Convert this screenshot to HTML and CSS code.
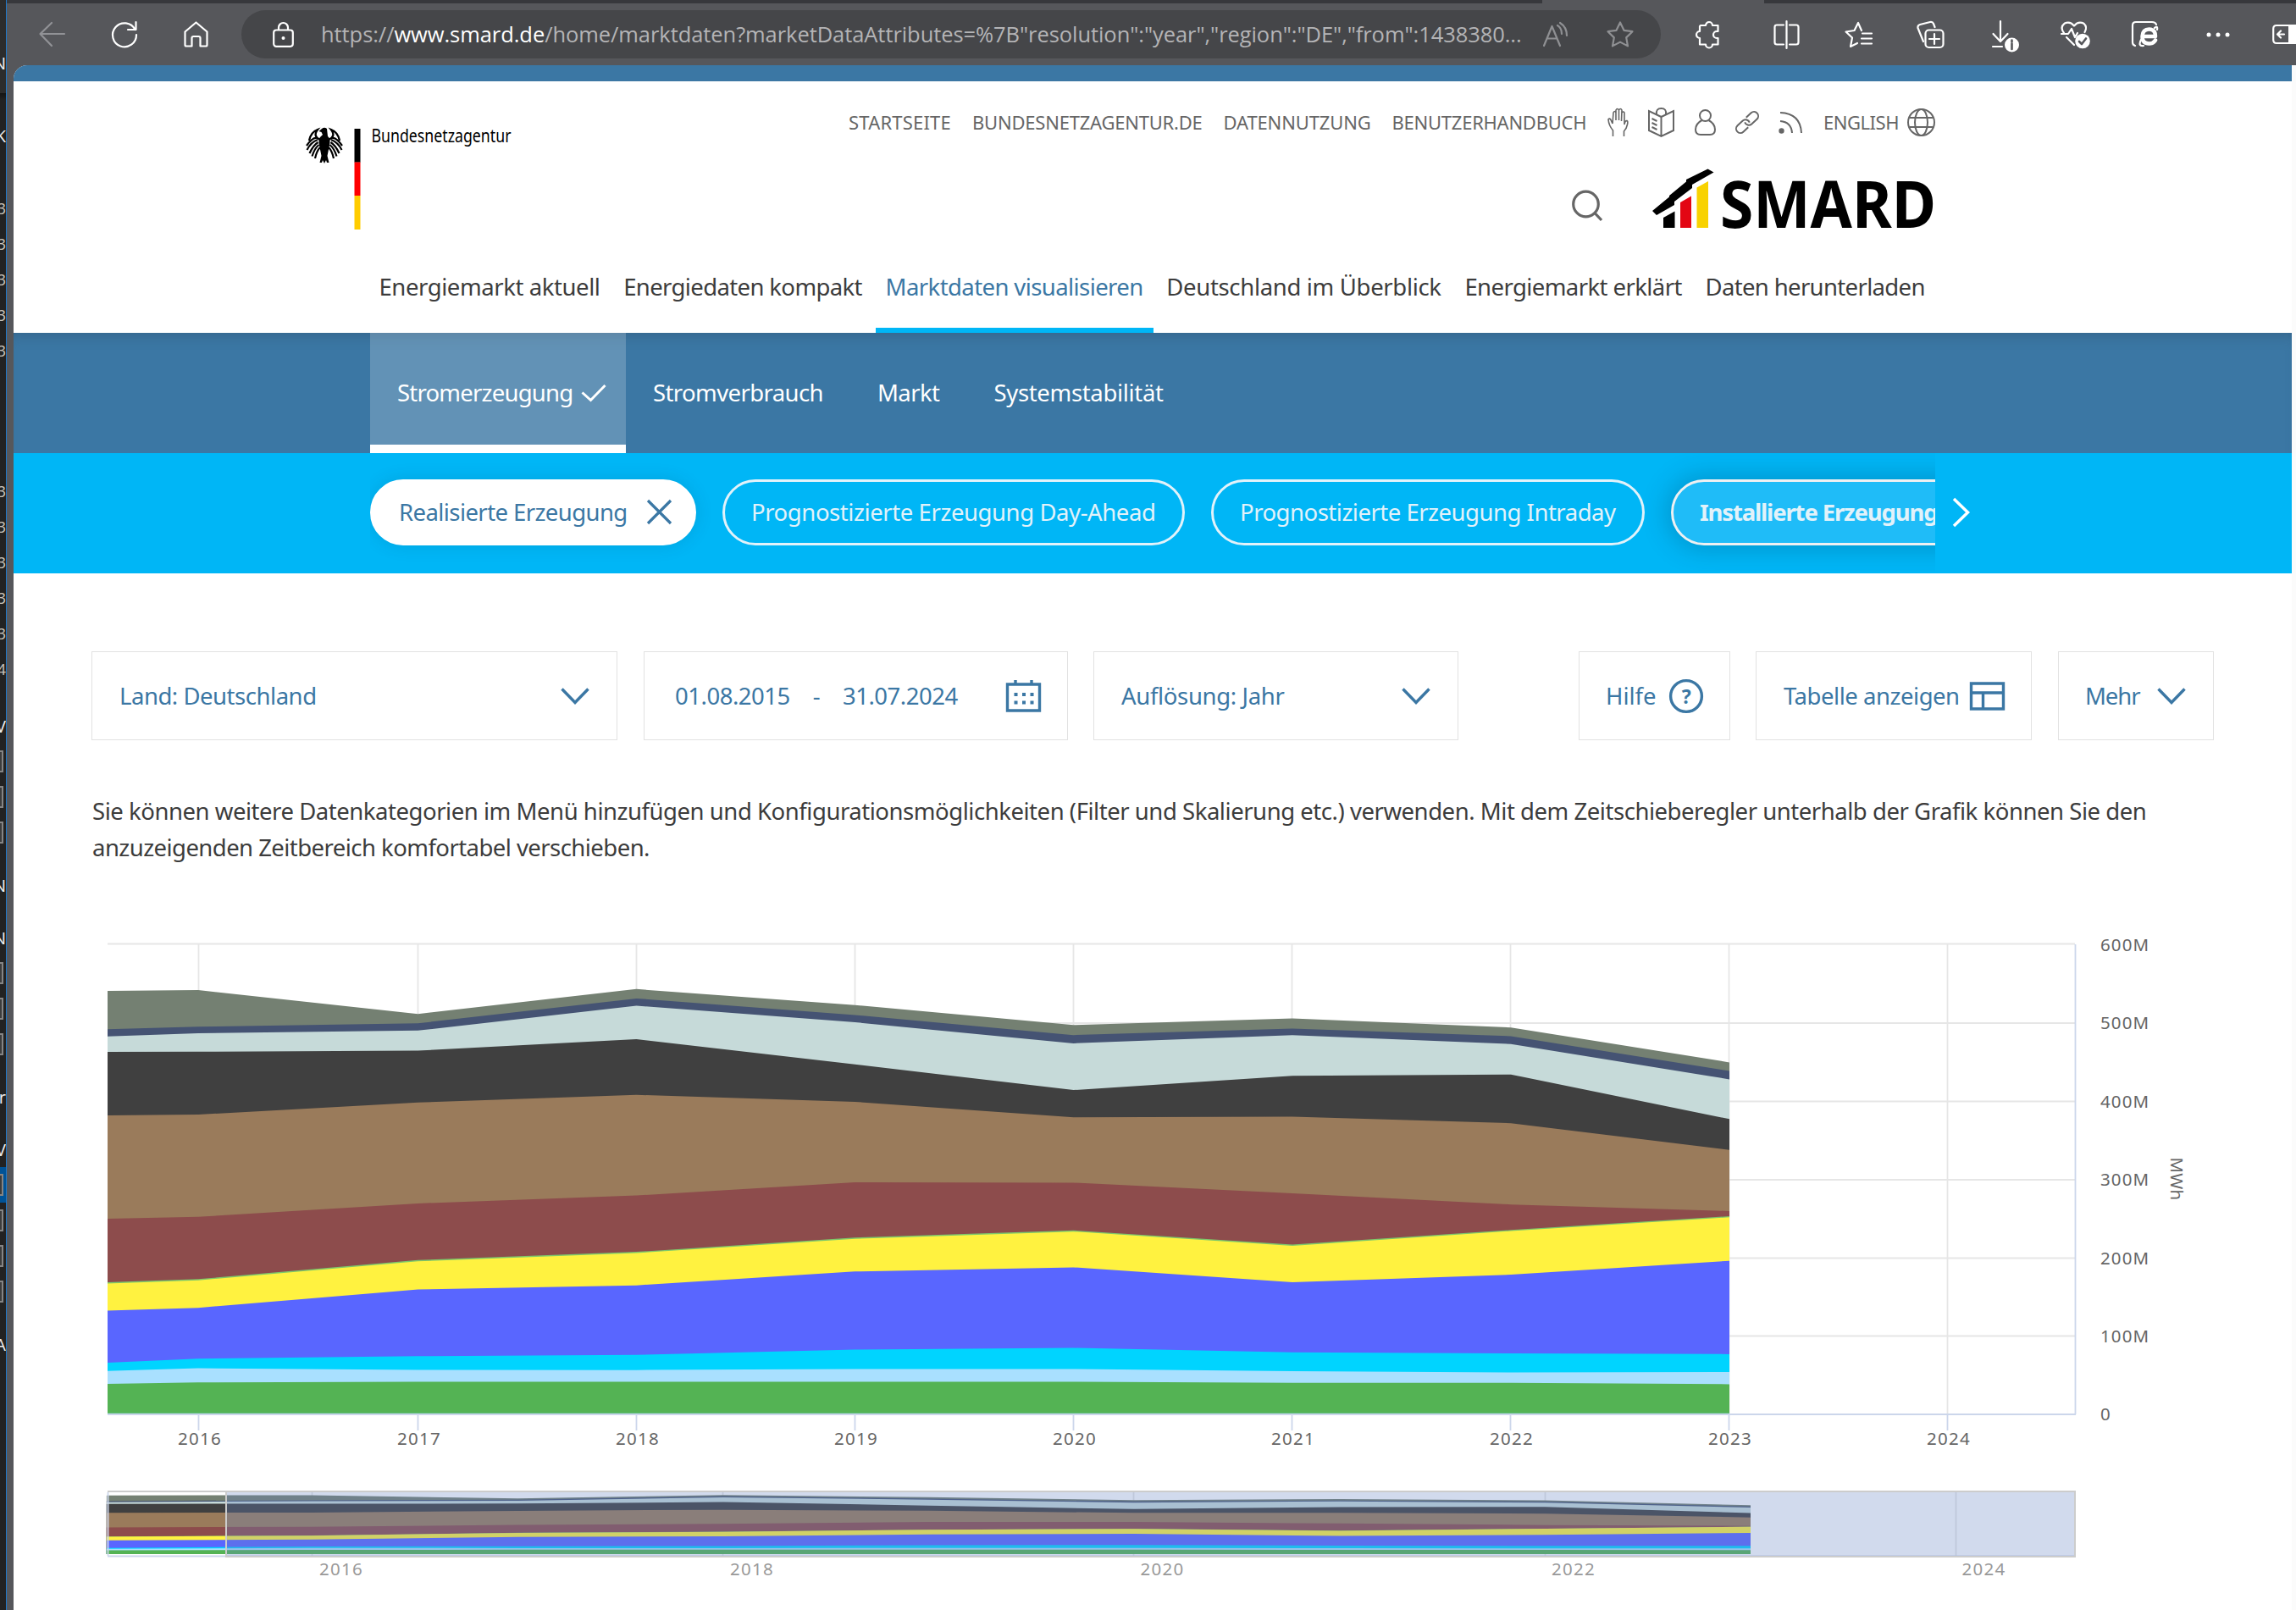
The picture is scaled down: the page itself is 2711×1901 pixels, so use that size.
FILE: index.html
```html
<!DOCTYPE html>
<html lang="de">
<head>
<meta charset="utf-8">
<title>SMARD | Marktdaten visualisieren</title>
<link rel="stylesheet" href="styles.css">
</head>
<body>
<aside class="behind">
  <div class="grp g1"><span>N</span></div>
  <div class="grp g2"><span>K</span></div>
  <div class="grp g3"><span>3</span><span>3</span><span>3</span><span>3</span><span>3</span></div>
  <div class="grp g4"><span>3</span><span>3</span><span>3</span><span>3</span><span>3</span><span>4</span></div>
  <div class="grp g5"><span>V</span><i></i><i></i><i></i></div>
  <div class="grp g6"><span>N</span></div>
  <div class="grp g6"><span>N</span><i></i><i></i><i></i></div>
  <div class="grp g6"><span>Fr</span></div>
  <div class="grp g6"><span>V</span><i class="sel"></i><i></i><i></i><i></i></div>
  <div class="grp g6"><span>A</span></div>
</aside>
<div class="window">
  <div class="tabs"><div class="tab"></div></div>
  <div class="toolbar">
    <svg class="tb back" width="31" height="30" viewBox="0 0 31 30"><path d="M30 14H2M15 1 1.500 14 15 28"/></svg>
    <svg class="tb reload" width="32" height="32" viewBox="0 0 32 32"><path d="M29.500 1v9H20M28.500 10A14 14 0 1 0 30 16"/></svg>
    <svg class="tb home" width="29" height="31" viewBox="0 0 29 31"><path d="M1.500 12.500 14.500 1.500l13 11V28q0 1.500-1.500 1.500h-6.500v-9.500q0-2-2-2h-6q-2 0-2 2v9.500H3q-1.500 0-1.500-1.500z"/></svg>
    <div class="address">
      <svg class="tb" width="25" height="30" viewBox="0 0 25 30"><rect x="1.200" y="9.500" width="22.600" height="19.300" rx="3"/><path d="M7 9V6.500a5.500 5.500 0 0 1 11 0V9"/><circle cx="12.500" cy="19" r="2" class="fill"/></svg>
      <span class="url">https://<b>www.smard.de</b>/home/marktdaten?marketDataAttributes=%7B"resolution":"year","region":"DE","from":1438380...</span>
      <svg class="tb dim" width="30" height="29" viewBox="0 0 30 29"><path d="M1 28 10.500 5 20 28M4.500 19.500h12M17 4q5 3 5 10M20 1q8 5 8 15"/></svg>
      <svg class="tb dim star" width="32" height="31" viewBox="0 0 32 31"><path d="m16 1.500 4.500 9.300 10 1.400-7.300 7.200 1.800 10L16 24.600l-9 4.800 1.800-10L1.500 12.200l10-1.400z"/></svg>
    </div>
    <svg class="tb puzzle" width="29" height="32" viewBox="0 0 29 32"><path d="M6 5h6a4 4 0 0 1 8 0h6.500v7H25a4 4 0 0 0 0 8h1.500v7.500H20a4 4 0 0 1-8 0H5V20a4 4 0 0 1 0-8V6z"/></svg>
    <i class="divider"></i>
    <svg class="tb split" width="31" height="32" viewBox="0 0 31 32"><path d="M12 4.500H4q-2.500 0-2.500 2.500v18q0 2.500 2.500 2.500h8M19 4.500h8q2.500 0 2.500 2.500v18q0 2.500-2.500 2.500h-8M15.500 0v32"/></svg>
    <svg class="tb favs" width="33" height="32" viewBox="0 0 33 32"><path d="M20 11 16 2l-4.500 9L1.500 12.500 9 19.500 7 30l8-4M21 14.500h11M20 20.500h12M20 26.500h12"/></svg>
    <svg class="tb coll" width="33" height="32" viewBox="0 0 33 32"><rect x="10.500" y="10.500" width="21" height="20.500" rx="4"/><path d="M21 15v12M15 21h12M8 24 1.500 8Q1 5 4 4l12-3q3-.5 4 2l1.500 4"/></svg>
    <svg class="tb down" width="34" height="37" viewBox="0 0 34 37"><path d="M10 0v23M1.500 15 10 24l8.500-9M1 30h11"/><circle cx="23.500" cy="28" r="8.500" class="fill"/><path class="hole" d="M23.500 26.500v6.500M23.500 22.500v2"/></svg>
    <svg class="tb heart" width="36" height="33" viewBox="0 0 36 33"><path d="M4 14Q-1 7 4.500 2.800 11-.5 16 5.500 21-.5 27.500 2.800 32 7 28.500 13M1 15h8l4-6 4 10 3-5M7 19l9 9"/><circle cx="26" cy="23.500" r="8.800" class="fill"/><path class="hole" d="m22 24 3 3 5-6.500"/></svg>
    <svg class="tb ie" width="32" height="31" viewBox="0 0 32 31"><path d="M4 29q-3-1-3-4V5q0-4 4-4h19q4 0 5 3"/><path class="fat" d="M13 18h15q0-8.500-7.500-8.500T12.500 18q0 8.500 8 8.500 5 0 7.500-4"/><path d="M27 8q4-3 3 2M11 22q-4 8 3 7"/></svg>
    <svg class="tb dots" width="28" height="6" viewBox="0 0 28 6"><g class="fill"><circle cx="3" cy="3" r="2.500"/><circle cx="14" cy="3" r="2.500"/><circle cx="25" cy="3" r="2.500"/></g></svg>
    <svg class="tb side" width="28" height="23" viewBox="0 0 28 23"><path d="M30 1H5Q1.200 1 1.200 5v13q0 4 3.800 4h25M14 11.500H7M10 7.500l-4 4 4 4"/><path class="fill" d="M19 0h9v23h-9z"/></svg>
  </div>
  <div class="page">
    <div class="topline"></div>
    <header class="header">
      <svg class="brand" width="256" height="130" viewBox="360 145 256 130">
        <g class="eagle">
          <path d="M380 152q3-2.500 6 0l1 9q3 2 2.500 8l-2 10-1 5 2 8h-2.500l-1-3-2 4-2-4-1 3H377.500l2-8-1-5-2-10q-.5-6 2.500-8l2-2-1.500-3-3-1z"/>
          <path class="feather" d="M374 163q-5-1-12 9M375 165q-8 3-12.500 12M375.500 168q-6 4-10 13M376.500 171q-5 4-8 13.500M378 174q-4 4-6 13M392 163q5-1 12 9M391 165q8 3 12.500 12M390.500 168q6 4 10 13M389.500 171q5 4 8 13.500M388 174q4 4 6 13"/>
          <path class="head" d="M378 165q-9-4-3-12-8 3-10 13M388 165q9-4 3-12 8 3 10 13"/>
        </g>
        <path d="M418.500 152h7v39.700h-7z"/><path class="red" d="M418.500 191.500h7V231h-7z"/><path class="gold" d="M418.500 231h7v40h-7z"/>
        <text x="438.500" y="167.700" textLength="165" lengthAdjust="spacingAndGlyphs">Bundesnetzagentur</text>
      </svg>
      <nav class="meta">
        <span class="m1">STARTSEITE</span><span class="m2">BUNDESNETZAGENTUR.DE</span><span class="m3">DATENNUTZUNG</span><span class="m4">BENUTZERHANDBUCH</span>
        <svg class="hand" width="25" height="35" viewBox="0 0 25 35"><path d="M6.500 34v-7Q1.500 21 1 14q1.500-2 3 .5L6 19M6 19 7 6q1.500-3 3 0v9M10 6V3q1.500-3 3.500 0v12M13.500 3q2-3 3.500 0l-.5 13M17 6q2-2 3 0v14q1-5 3-4.500 1.500 1 .5 4.500-1 5-4 8v6"/></svg>
        <svg width="31" height="35" viewBox="0 0 31 35"><path d="M15.500 34V11L1 4v23l14.500 7L30 27V4l-14.500 7M10 8q-1-7 5.500-7T21 8M4.500 13l6 3M4.500 18l6 3M4.500 23l6 3"/></svg>
        <svg width="25" height="31" viewBox="0 0 25 31"><circle cx="12.500" cy="7.500" r="6.500"/><path d="M8.500 13Q1 17 1 24q0 6 6 6h11q6 0 6-6 0-7-7.500-11"/></svg>
        <svg width="28" height="27" viewBox="0 0 28 27"><g transform="rotate(-43 14 13.500)"><path d="M11 18.500H3a5 5 0 0 1 0-10h8.500a5 5 0 0 1 4.500 7M17 8.500h8a5 5 0 0 1 0 10h-8.500a5 5 0 0 1-4.500-7"/></g></svg>
        <svg width="28" height="27" viewBox="0 0 28 27"><path d="M2 2q24 1 25 24M2 12q13 1 14 14"/><circle cx="3.500" cy="23.500" r="2.200" class="dot"/></svg>
        <span class="m5">ENGLISH</span>
        <svg class="globe" width="33" height="33" viewBox="0 0 33 33"><circle cx="16.500" cy="16.500" r="15.500"/><ellipse cx="16.500" cy="16.500" rx="7.500" ry="15.500"/><path d="M3 11h27M3 22h27"/></svg>
      </nav>
      <div class="identity">
        <svg class="search" width="37" height="38" viewBox="0 0 37 38"><circle cx="16.500" cy="16" r="14.800"/><path d="m27 26.500 8 8.500"/></svg>
        <svg class="smard" width="336" height="74" viewBox="1950 198 336 74">
          <path d="m1951 249 20-16.500V231l20-16.500V212l25.500-12.500 7 4L1998 218v4l-21 16v4l-21 12z"/>
          <path d="m1964 257 13.500-7.500v19.500H1964z"/><path class="r" d="m1984 239 13-7.500V269h-13z"/><path class="y" d="m2003.500 221.500 13.500-7.500v55h-13.500z"/>
          <text x="2031" y="268.700" textLength="255" lengthAdjust="spacingAndGlyphs">SMARD</text>
        </svg>
      </div>
      <nav class="main-nav">
        <span class="n1">Energiemarkt aktuell</span><span class="n2">Energiedaten kompakt</span><span class="n3 active">Marktdaten visualisieren</span><span class="n4">Deutschland im Überblick</span><span class="n5">Energiemarkt erklärt</span><span class="n6">Daten herunterladen</span>
      </nav>
    </header>
    <nav class="categories">
      <span class="c1 active">Stromerzeugung<svg width="30" height="22" viewBox="0 0 30 22"><path d="m1.500 10.500 10 9L28.500 2"/></svg></span><span class="c2">Stromverbrauch</span><span class="c3">Markt</span><span class="c4">Systemstabilität</span>
    </nav>
    <div class="subcats">
      <div class="pills">
        <span class="pill p1 on">Realisierte Erzeugung<svg width="31" height="31" viewBox="0 0 31 31"><path d="M2 2l27 27M29 2 2 29"/></svg></span>
        <span class="pill p2">Prognostizierte Erzeugung Day-Ahead</span>
        <span class="pill p3">Prognostizierte Erzeugung Intraday</span>
        <span class="pill p4 hover">Installierte Erzeugungsleistung</span>
      </div>
      <svg class="next" width="21" height="36" viewBox="0 0 21 36"><path d="m2 2 16.500 16L2 34"/></svg>
    </div>
    <main class="content">
      <div class="controls">
        <div class="box land"><span>Land: Deutschland</span><svg width="34" height="20" viewBox="0 0 34 20"><path d="m1.500 1.500 15.500 16 15.500-16"/></svg></div>
        <div class="box dates"><span>01.08.2015</span><span class="dash">-</span><span>31.07.2024</span><svg width="41" height="38" viewBox="0 0 41 38"><path d="M1.500 5h38v31h-38zM11 0v6M30 0v6"/><path class="dotted" d="M9.500 17h24M9.500 26.500h24"/></svg></div>
        <div class="box res"><span>Auflösung: Jahr</span><svg width="34" height="20" viewBox="0 0 34 20"><path d="m1.500 1.500 15.500 16 15.500-16"/></svg></div>
        <div class="box help"><span>Hilfe</span><svg width="40" height="40" viewBox="0 0 40 40"><circle cx="20" cy="20" r="18.400"/><text x="20" y="28.500" text-anchor="middle">?</text></svg></div>
        <div class="box table"><span>Tabelle anzeigen</span><svg width="41" height="34" viewBox="0 0 41 34"><path d="M1.500 2h38v30h-38zM1.500 13h38M15.500 13v19"/></svg></div>
        <div class="box more"><span>Mehr</span><svg width="34" height="20" viewBox="0 0 34 20"><path d="m1.500 1.500 15.500 16 15.500-16"/></svg></div>
      </div>
      <p class="intro">Sie können weitere Datenkategorien im Menü hinzufügen und Konfigurationsmöglichkeiten (Filter und Skalierung etc.) verwenden. Mit dem Zeitschieberegler unterhalb der Grafik können Sie den<br><span class="line2">anzuzeigenden Zeitbereich komfortabel verschieben.</span></p>
      <svg class="chart" width="2500" height="811" viewBox="108 1090 2500 811">
        <defs>
          <clipPath id="plot"><rect x="127" y="1100" width="1915" height="570"/></clipPath>
          <g id="areas">
            <path fill="#748072" d="M-23 200 234 195 493.500 264 751.500 192 1009.500 238 1267.500 296 1526 277 1784 303 2042 404V1419H-23z"/>
            <path fill="#455373" d="M-23 318 234 301 493.500 291 751.500 219 1009.500 267 1267.500 325 1526 306 1784 328 2042 429V1419H-23z"/>
            <path fill="#c6dad9" d="M-23 342 234 320 493.500 312 751.500 240 1009.500 288 1267.500 349 1526 325 1784 351 2042 453V1419H-23z"/>
            <path fill="#404040" d="M-23 375 234 373 493.500 370 751.500 337 1009.500 410 1267.500 484 1526 443 1784 439 2042 568V1419H-23z"/>
            <path fill="#9a7b5b" d="M-23 560 234 555 493.500 520 751.500 498 1009.500 518 1267.500 563 1526 561 1784 580 2042 657V1419H-23z"/>
            <path fill="#8d4c4c" d="M-23 863 234 851 493.500 812 751.500 789 1009.500 751 1267.500 752 1526 783 1784 815 2042 834V1419H-23z"/>
            <path fill="#7dc86a" d="M-23 1053 234 1031 493.500 976 751.500 952 1009.500 911 1267.500 890 1526 931 1784 889 2042 849V1419H-23z"/>
            <path fill="#fff240" d="M-23 1056 234 1034.500 493.500 979.500 751.500 955.500 1009.500 914.500 1267.500 893.500 1526 934.500 1784 892 2042 852V1419H-23z"/>
            <path fill="#5966ff" d="M-23 1133 234 1114 493.500 1061 751.500 1049 1009.500 1009 1267.500 997 1526 1040 1784 1018 2042 978V1419H-23z"/>
            <path fill="#00d4ff" d="M-23 1290 234 1261 493.500 1254 751.500 1250 1009.500 1235 1267.500 1230 1526 1243 1784 1246 2042 1248V1419H-23z"/>
            <path fill="#a9e0ff" d="M-23 1308 234 1289 493.500 1293.500 751.500 1294 1009.500 1291 1267.500 1291 1526 1297 1784 1301 2042 1300V1419H-23z"/>
            <path fill="#54b354" d="M-23 1340 234 1330 493.500 1328 751.500 1328 1009.500 1328 1267.500 1328 1526 1331 1784 1331 2042 1335V1419H-23z"/>
          </g>
        </defs>
        <path class="grid" d="M127 1114.500H2450M127 1208H2450M127 1300.500H2450M127 1393H2450M127 1485.500H2450M127 1577.500H2450M234.500 1115V1670M493.500 1115V1670M751.500 1115V1670M1009.500 1115V1670M1267.500 1115V1670M1525.500 1115V1670M1783.500 1115V1670M2041.500 1115V1670M2299.500 1115V1670"/>
        <g clip-path="url(#plot)"><use href="#areas" transform="matrix(1 0 0 .40816 0 1089.500)"/></g>
        <path class="axis" d="M127 1670H2451M2450.500 1115V1670M234.500 1671v18M493.500 1671v18M751.500 1671v18M1009.500 1671v18M1267.500 1671v18M1525.500 1671v18M1783.500 1671v18M2041.500 1671v18M2299.500 1671v18"/>
        <g class="years"><text x="236" y="1705.500">2016</text><text x="495" y="1705.500">2017</text><text x="753" y="1705.500">2018</text><text x="1011" y="1705.500">2019</text><text x="1269" y="1705.500">2020</text><text x="1527" y="1705.500">2021</text><text x="1785" y="1705.500">2022</text><text x="2043" y="1705.500">2023</text><text x="2301" y="1705.500">2024</text></g>
        <g class="values"><text x="2480" y="1122.500">600M</text><text x="2480" y="1215">500M</text><text x="2480" y="1307.500">400M</text><text x="2480" y="1399.500">300M</text><text x="2480" y="1492.500">200M</text><text x="2480" y="1584.500">100M</text><text x="2480" y="1676.500">0</text><text class="unit" transform="translate(2563 1366.500) rotate(90)">MWh</text></g>
        <path class="navgrid" d="M368.500 1762v75M853.500 1762v75M1338.500 1762v75M1824.500 1762v75M2309.500 1762v75"/>
        <use href="#areas" transform="matrix(.94 0 0 .0569 147.500 1754.300)"/>
        <path class="axis" d="M127 1837.500H2450M127.500 1762v75"/>
        <path class="mask" d="M267 1762H2450V1838H267z"/>
        <path class="outline" d="M127 1761H2450V1838H267V1761"/>
        <g class="years nav"><text x="403" y="1859.500">2016</text><text x="888" y="1859.500">2018</text><text x="1372.500" y="1859.500">2020</text><text x="1858" y="1859.500">2022</text><text x="2342.500" y="1859.500">2024</text></g>
      </svg>
    </main>
  </div>
</div>
</body>
</html>
```
FILE: styles.css
```css
*{box-sizing:border-box}
body{margin:0;width:2711px;height:1901px;display:flex;overflow:hidden;background:#fff;font:27.5px/43px "Noto Sans",sans-serif;color:#3c3c3c}
svg{display:block;flex:none;fill:none;overflow:visible}
span{white-space:nowrap}

/* strip of the window behind */
.behind{width:8px;flex:none;overflow:hidden;background:linear-gradient(#2c2c2c 110px,#141414 110px,#222 118px);border-right:1px solid #1f78c8;padding-top:53px}
.grp{display:flex;flex-direction:column}
.grp span,.grp i{height:42px;width:7px;display:flex;justify-content:flex-end;align-items:center;font:18px "Open Sans",sans-serif;color:#c9c4bd}
.grp i::after{content:"";width:14px;flex:none;height:22px;background:#3c3c3c;border:2px solid #858585;margin-right:3px}
.grp i.sel{background:#005397}
.g1 span,.g2 span,.g5 span,.g6 span{color:#f0f0f0;font-size:20px}
.g2{margin-top:44px}
.g3{margin-top:44px}
.g4{margin-top:124px}
.g5{margin-top:25px}
.g6{margin-top:20px}

.window{flex:1;min-width:0;display:flex;flex-direction:column;background:#56575b}
.tabs{height:4px;background:#37383c;display:flex}
.tab{margin-left:1813px;width:262px;background:#56575b}

/* browser toolbar */
.toolbar{height:73px;flex:none;display:flex;align-items:center;overflow:hidden}
.tb{stroke:#fff;stroke-width:2.2;stroke-linecap:round;stroke-linejoin:round}
.tb .fill{fill:#fff;stroke:none}
.tb .hole{stroke:#56575b;stroke-width:2.6}
.tb .fat{stroke-width:4.5}
.back{margin-left:38px;stroke:#919296}
.reload{margin-left:54px}
.home{margin-left:54px}
.address{margin-left:39px;width:1676px;height:57px;border-radius:29px;background:#454649;display:flex;align-items:center;padding-left:37px;flex:none}
.url{font:25.5px/57px "Open Sans",sans-serif;letter-spacing:-.07px;color:#b4b4b6;margin-left:32px;width:1443px;flex:none}
.url b{font-weight:400;color:#fff}
.dim{stroke:#8f9093}
.star{margin-left:45px}
.puzzle{margin-left:41px}
.divider{width:1.5px;height:31px;background:#77787b;margin-left:32px}
.split{margin-left:31px}
.favs{margin-left:53px}
.coll{margin-left:52px}
.down{margin:5px 0 0 56px}
.heart{margin:2px 0 0 47px}
.ie{margin-left:48px}
.dots{margin-left:56px}
.side{margin-left:50px}

.page{flex:1;margin-left:8px;border-right:5px solid #fbfbfb;border-top-left-radius:16px;overflow:hidden;background:#fff}
.topline{height:19px;background:#3b77a4}

/* site header */
.header{height:297px;display:grid;grid-template:80px 114px 103px / 628px 1fr;padding-left:344px}
.brand{grid-row:1 / 3;margin-top:49px;fill:#000}
.brand text{font:22.500px "Noto Sans",sans-serif}
.feather,.head{fill:none;stroke:#000;stroke-width:2.2}
.head{stroke-width:2.400}
.red{fill:#f00}
.gold{fill:#fc0}
.meta{display:flex;align-items:center;gap:25px;padding:17px 0 0 14px;font-size:22px;color:#666}
.meta svg{stroke:#666;stroke-width:2}
.meta svg + svg{margin-left:-1.8px}
.meta .dot{fill:#666}
.m1{letter-spacing:.2px}.m2{letter-spacing:-.22px}.m3{letter-spacing:-.15px}.m4{letter-spacing:-.26px}.m5{letter-spacing:-.48px}
.meta .hand{stroke-width:1.600}
.meta .globe{margin-left:-15px}
.identity{display:flex;padding:22px 0 0 868px}
.search{stroke:#666;stroke-width:3.200;margin-top:26.5px}
.smard{margin-left:57px;fill:#000}
.smard .r{fill:#e30613}
.smard .y{fill:#f8d200}
.smard text{font:700 77px "Noto Sans",sans-serif}
.main-nav{grid-column:1 / 3;display:flex;gap:3.7px;padding-left:75.5px}
.main-nav span{padding:0 12px;line-height:97px;border-bottom:6px solid transparent}
.main-nav .active{color:#3b77a4;border-color:#00b6f6}
.n1{letter-spacing:-.42px}.n2{letter-spacing:-.63px}.n3{letter-spacing:-.59px}.n4{letter-spacing:-.33px}.n5{letter-spacing:-.58px}.n6{letter-spacing:-.65px}

/* category bars */
.categories{height:142px;background:#3b77a4;box-shadow:inset 0 12px 16px -10px rgba(40,60,80,.35);display:flex;padding-left:421px;color:#fff;line-height:142px}
.categories span{padding:0 32px;display:flex;align-items:center}
.categories .active{width:302px;background:rgba(255,255,255,.2);box-shadow:inset 0 -10px #fff;padding-right:0}
.categories svg{stroke:#fff;stroke-width:3;margin-left:10px}
.c1{letter-spacing:-.78px}.c2{letter-spacing:-.6px}.c3{letter-spacing:-.58px}.c4{letter-spacing:-.33px}
.subcats{height:142px;background:#00b6f6;display:flex;align-items:center;padding:0 0 2px 421px}
.pills{width:1848px;height:140px;display:flex;gap:31px;align-items:center;overflow:hidden;flex:none}
.pill{height:78px;border:3px solid #e2f2fa;border-radius:39px;padding:0 31px 1px;flex:none;display:flex;align-items:center;color:#e2f2fa}
.pill.on{background:#fff;border-color:#fff;color:#3b77a4;box-shadow:0 0 20px rgba(0,60,90,.15)}
.pill svg{stroke:#3b77a4;stroke-width:3.200;margin-left:22px}
.p1{width:385px;letter-spacing:-.58px}
.p2{width:546px;letter-spacing:-.42px}
.p3{width:512px;letter-spacing:-.49px}
.p4{letter-spacing:-1.15px;font-weight:700}
.hover{background:#1fbcf8;border-color:#eef0f2;box-shadow:0 0 30px 4px rgba(0,50,80,.25)}
.next{stroke:#fff;stroke-width:3.500;margin-left:20px}

/* filters and chart */
.content{padding:92px 0 0 92px}
.controls{display:flex;color:#3b77a4}
.box{height:105px;border:1.500px solid #e2e2e2;display:flex;align-items:center;padding-left:32px;letter-spacing:-.47px;flex:none}
.box svg{stroke:#3b77a4;stroke-width:3.400}
.land{width:621px}.land svg{margin:0 32px 0 auto}
.dates{width:501px;margin-left:31px;padding-left:36px}.dates svg{margin:0 31px 0 auto}
.dash{width:62px;text-align:center}
.dotted{stroke-dasharray:4 5.500;stroke-width:4}
.res{width:431px;margin-left:30px}.res span{letter-spacing:-.34px}.res svg{margin:0 32px 0 auto}
.help{width:179px;margin-left:142px;padding-left:31px}.help span{letter-spacing:0}.help svg{margin-left:15px}
.help text{font:700 23px "Noto Sans",sans-serif;fill:#3b77a4;stroke:none}
.table{width:326px;margin-left:30px}.table svg{margin-left:12px}
.more{width:184px;margin-left:31px;padding-left:31px}.more span{letter-spacing:-1.100px}.more svg{margin-left:21px}
.intro{margin:62px 0 0 1px;letter-spacing:-.46px;white-space:nowrap}
.line2{letter-spacing:-.55px}
.chart{margin-top:68px}
.grid{stroke:#e6e6e6;stroke-width:1.800}
.axis{stroke:#ccd6eb;stroke-width:1.800}
.navgrid{stroke:#e6e6e6;stroke-width:1.800}
.mask{fill:rgba(102,133,194,.3)}
.outline{stroke:#ccc;stroke-width:2}
.chart text{font:20.500px "Noto Sans",sans-serif;fill:#666;letter-spacing:1.100px}
.years text{text-anchor:middle;letter-spacing:1.300px}
.chart .unit{letter-spacing:.2px}
.years.nav text{fill:#999}
```
